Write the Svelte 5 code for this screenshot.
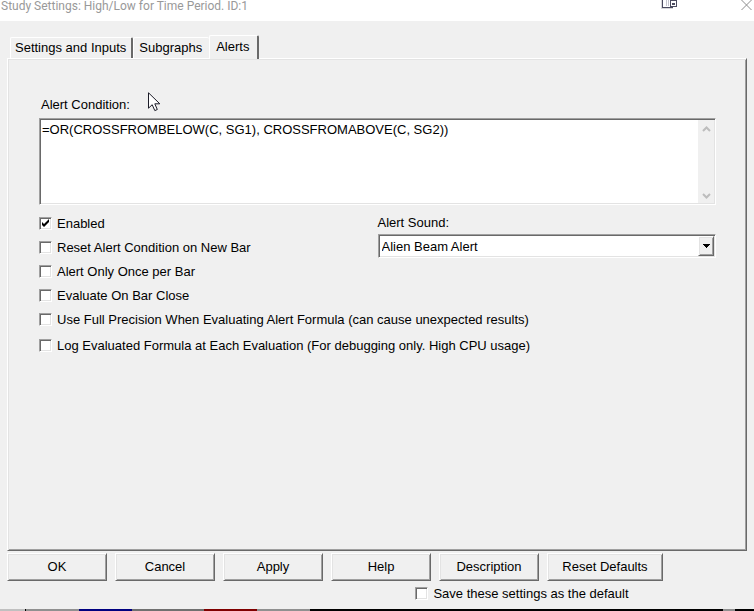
<!--
  @component StudySettings
  @description Study settings dialog, Alerts tab
-->

<script lang="ts">
  interface Option {
    id: string;
    text: string;
    checked: boolean;
  }

  // State
  let tabs = ["Settings and Inputs", "Subgraphs", "Alerts"];
  let activeTab = "Alerts";
  let condition = "=OR(CROSSFROMBELOW(C, SG1), CROSSFROMABOVE(C, SG2))";
  let sound = "Alien Beam Alert";
  let saveDefault = false;

  let options: Option[] = [
    { id: "enabled", text: "Enabled", checked: true },
    { id: "reset", text: "Reset Alert Condition on New Bar", checked: false },
    { id: "once", text: "Alert Only Once per Bar", checked: false },
    { id: "close", text: "Evaluate On Bar Close", checked: false },
  ];

  let wideOptions: Option[] = [
    {
      id: "precision",
      text: "Use Full Precision When Evaluating Alert Formula (can cause unexpected results)",
      checked: false,
    },
    {
      id: "log",
      text: "Log Evaluated Formula at Each Evaluation (For debugging only. High CPU usage)",
      checked: false,
    },
  ];

  const actions = ["OK", "Cancel", "Apply", "Help", "Description"];
</script>

<div class="window">
  <header class="titlebar">
    <span class="title">Study Settings: High/Low for Time Period. ID:1</span>
    <button class="title-button" aria-label="Detach window">
      <svg width="16" height="9" viewBox="0 0 16 9" shape-rendering="crispEdges">
        <path d="M0 0H1V8H12V9H0Z" fill="#d8d8d8" />
        <path d="M1 0H2V7H12V8H1Z" fill="#4b4b5f" />
        <path d="M5 0H6V6H5ZM7 0H8V6H7Z" fill="#c4c4cc" />
        <path d="M9 0H16V7H9ZM10 1V6H15V1Z" fill="#4b4b5f" fill-rule="evenodd" />
        <rect x="11" y="3" width="3" height="2" fill="#4b4b5f" />
      </svg>
    </button>
    <button class="title-button" aria-label="Close">
      <svg width="11" height="11" viewBox="0 0 11 11">
        <path d="M.5 0L10.5 10M10.5 0L.5 10" stroke="#8c8c8c" />
      </svg>
    </button>
  </header>

  <main class="body">
    <div class="tabs" role="tablist">
      {#each tabs as tab}
        <button
          class="tab"
          class:active={tab === activeTab}
          role="tab"
          aria-selected={tab === activeTab}
          on:click={() => (activeTab = tab)}>{tab}</button
        >
      {/each}
    </div>

    <section class="panel raised">
      <label for="condition">Alert Condition:</label>
      <div class="condition-box sunken">
        <textarea id="condition" bind:value={condition} spellcheck="false"></textarea>
        <div class="scrollbar">
          <svg width="9" height="6" viewBox="0 0 9 6">
            <path d="M1 5L4.5 1.5L8 5" fill="none" stroke="#bdbdbd" stroke-width="2" />
          </svg>
          <svg width="9" height="6" viewBox="0 0 9 6">
            <path d="M1 1L4.5 4.5L8 1" fill="none" stroke="#bdbdbd" stroke-width="2" />
          </svg>
        </div>
      </div>

      <div class="columns">
        <div class="options">
          {#each options as option (option.id)}
            <label class="check">
              <input class="sunken" type="checkbox" bind:checked={option.checked} />
              <span>{option.text}</span>
            </label>
          {/each}
        </div>
        <div class="sound">
          <label for="sound">Alert Sound:</label>
          <div class="select-box sunken">
            <select id="sound" bind:value={sound}>
              <option>Alien Beam Alert</option>
            </select>
            <span class="arrow raised">
              <svg width="7" height="4" viewBox="0 0 7 4" shape-rendering="crispEdges">
                <path d="M0 0H7V1H6V2H5V3H4V4H3V3H2V2H1V1H0Z" fill="#000" />
              </svg>
            </span>
          </div>
        </div>
      </div>

      <div class="options wide">
        {#each wideOptions as option (option.id)}
          <label class="check">
            <input class="sunken" type="checkbox" bind:checked={option.checked} />
            <span>{option.text}</span>
          </label>
        {/each}
      </div>
    </section>

    <div class="actions">
      {#each actions as action}
        <button class="action raised">{action}</button>
      {/each}
      <button class="action raised large">Reset Defaults</button>
    </div>

    <label class="check save">
      <input class="sunken" type="checkbox" bind:checked={saveDefault} />
      <span>Save these settings as the default</span>
    </label>
  </main>

  <!-- edge of the chart window behind the dialog -->
  <div class="backdrop">
    <i class="light"></i>
    <i class="grey"></i>
    <i class="navy"></i>
    <i class="dim"></i>
    <i class="red"></i>
    <i class="grey"></i>
    <i class="black"></i>
    <i class="grip"></i>
    <i class="tail"></i>
  </div>

  <svg class="pointer" width="13" height="20" viewBox="0 0 13 20">
    <path
      d="M.5 .8V16.2L4.2 12.7L6.8 18.6L9.3 17.5L6.8 11.8H11.8Z"
      fill="#fff"
      stroke="#1c1c28"
    />
  </svg>
</div>

<style>
  :global(body) {
    background: #f0f0f0;
  }

  .window {
    position: relative;
    display: flex;
    flex-direction: column;
    min-height: 100vh;
    background: #f0f0f0;
    color: #000;
    font-family: "Liberation Sans", Arial, sans-serif;
    font-size: 13px;
    line-height: 16px;
  }

  button,
  select,
  textarea {
    margin: 0;
    font: inherit;
    color: inherit;
  }

  /* Two-tone bevels shared by all the controls */
  .raised {
    border: 1px solid;
    border-color: #fff #696969 #696969 #fff;
    box-shadow:
      inset 1px 1px #e3e3e3,
      inset -1px -1px #a0a0a0;
  }

  .sunken {
    border: 1px solid;
    border-color: #a0a0a0 #fff #fff #a0a0a0;
    background: #fff;
    box-shadow:
      inset 1px 1px #696969,
      inset -1px -1px #e3e3e3;
  }

  /* Title bar */
  .titlebar {
    display: flex;
    align-items: flex-start;
    height: 21px;
    padding: 0 2px 0 1px;
    background: #fff;
  }

  .title {
    flex: 1;
    color: #999;
    font-family: Roboto, "Open Sans", sans-serif;
    font-size: 12px;
    line-height: 12px;
  }

  .title-button {
    display: flex;
    margin-left: 64px;
    padding: 0;
    border: none;
    background: none;
  }

  .body {
    display: flex;
    flex: 1;
    flex-direction: column;
    padding: 14px 7px 4px;
  }

  /* Tabs */
  .tabs {
    display: flex;
    align-items: flex-end;
    padding-left: 3px;
  }

  .tab {
    height: 21px;
    padding: 0 5px 0 4px;
    border: 1px solid #fff;
    border-right: 2px solid #696969;
    border-bottom: none;
    border-radius: 2px 2px 0 0;
    background: #f0f0f0;
    white-space: nowrap;
  }

  .tab:nth-child(2) {
    padding: 0 7px 0 5px;
    border-right: none;
  }

  .tab.active {
    z-index: 1;
    height: 24px;
    margin-bottom: -1px;
    padding: 0 8px 2px 6px;
  }

  .panel {
    flex: 1;
    padding: 38px 30px 20px 31px;
  }

  .panel > label {
    display: block;
    padding-left: 2px;
  }

  /* Alert condition */
  .condition-box {
    display: flex;
    height: 83px;
    margin-top: 5px;
    padding: 1px;
  }

  .condition-box textarea {
    flex: 1;
    padding: 2px 1px;
    border: none;
    outline: none;
    background: #fff;
    resize: none;
    overflow: hidden;
  }

  .scrollbar {
    display: flex;
    flex-direction: column;
    align-items: center;
    justify-content: space-between;
    width: 16px;
    padding: 6px 0 4px;
    box-sizing: border-box;
    background: #f0f0f0;
  }

  .columns {
    display: grid;
    grid-template-columns: 1fr 1fr;
    margin-top: 6px;
  }

  .options {
    display: flex;
    flex-direction: column;
  }

  .wide {
    gap: 2px;
  }

  .check {
    display: flex;
    align-items: center;
    gap: 5px;
    height: 24px;
  }

  .check span {
    padding-top: 2px;
  }

  .check input {
    flex: none;
    width: 13px;
    height: 13px;
    margin: 0;
    appearance: none;
  }

  .check input:checked {
    background: #fff
      url("data:image/svg+xml,%3Csvg xmlns='http://www.w3.org/2000/svg' viewBox='0 0 9 9'%3E%3Cpath d='M1 3V6L3 8L8 3V0L3 5Z'/%3E%3C/svg%3E")
      center / 9px 9px no-repeat;
  }

  /* Alert sound */
  .sound {
    padding-top: 4px;
  }

  .sound label {
    display: block;
  }

  .select-box {
    display: grid;
    height: 20px;
    margin-top: 3px;
    padding: 1px;
  }

  .select-box select {
    grid-area: 1 / 1;
    padding: 1px 18px 0 2px;
    border: none;
    outline: none;
    appearance: none;
    background: #fff;
  }

  .arrow {
    display: flex;
    grid-area: 1 / 1;
    align-items: center;
    justify-content: center;
    justify-self: end;
    width: 16px;
    box-sizing: border-box;
    background: #f0f0f0;
    pointer-events: none;
  }

  /* Dialog buttons */
  .actions {
    display: flex;
    gap: 8px;
    margin-top: 2px;
  }

  .action {
    width: 100px;
    height: 28px;
    padding: 0;
    background: #f0f0f0;
    white-space: nowrap;
  }

  .action.large {
    width: 116px;
  }

  .save {
    align-self: center;
    margin-left: 290px;
  }

  /* Strip of the chart behind the dialog */
  .backdrop {
    display: flex;
    height: 2px;
    background: #000;
  }

  .backdrop i {
    width: 53px;
    background: #909090;
  }

  .backdrop .light {
    width: 25px;
    margin-right: 1px;
    background: #c0c0c0;
  }

  .backdrop .navy {
    background: #000080;
  }

  .backdrop .dim {
    width: 72px;
    background: #707070;
  }

  .backdrop .red {
    background: #800000;
  }

  .backdrop .black {
    flex: 1;
    background: #000;
  }

  .backdrop .grip {
    width: 12px;
  }

  .backdrop .tail {
    width: 19px;
    background: #000;
  }

  .pointer {
    position: absolute;
    top: 92px;
    left: 148px;
    pointer-events: none;
  }
</style>
